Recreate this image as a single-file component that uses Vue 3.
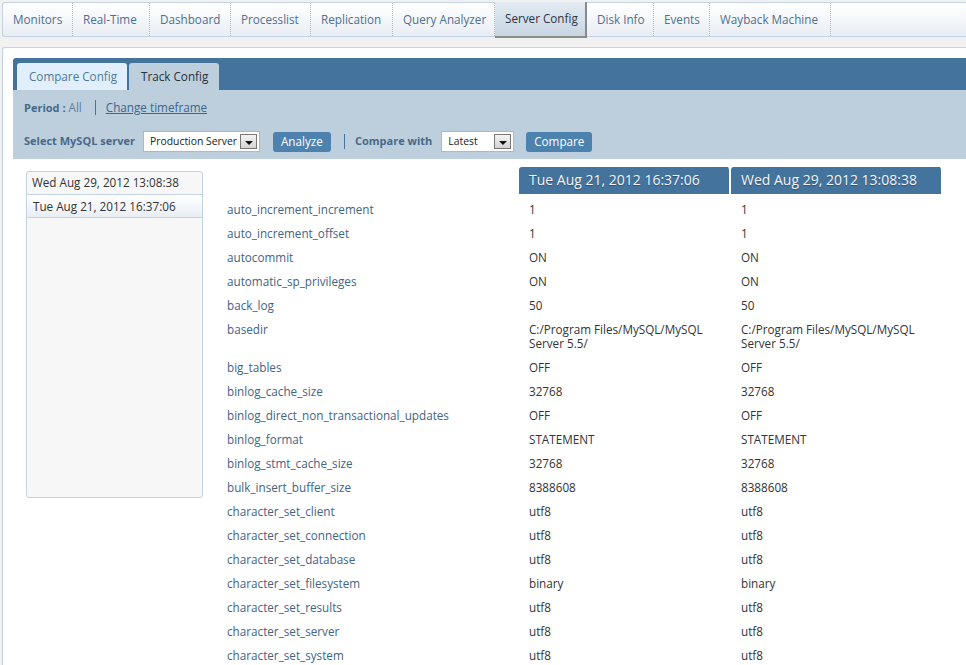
<template>
  <div class="page">
    <!-- top nav -->
    <ul class="nav">
      <li
        v-for="item in navItems"
        :key="item.label"
        :class="{ active: item.label === 'Server Config' }"
        :style="{ width: item.width + 'px' }"
      >{{ item.label }}</li>
    </ul>

    <div class="card">
      <div class="tabs">
        <span class="tab first">Compare Config</span>
        <span class="tab current">Track Config</span>
      </div>

      <div class="filters">
        <div class="period">
          <b>Period :</b> <span class="all">All</span>
          <i class="sep"></i>
          <a class="change">Change timeframe</a>
        </div>
        <div class="server-row">
          <b>Select MySQL server</b>
          <div class="select server">
            <span>Production Server</span>
            <i class="arrow"></i>
          </div>
          <button class="btn analyze">Analyze</button>
          <i class="sep"></i>
          <b>Compare with</b>
          <div class="select latest">
            <span>Latest</span>
            <i class="arrow"></i>
          </div>
          <button class="btn">Compare</button>
        </div>
      </div>

      <div class="body">
        <div class="history">
          <div class="snap">Wed Aug 29, 2012 13:08:38</div>
          <div class="snap selected">Tue Aug 21, 2012 16:37:06</div>
        </div>

        <table class="config">
          <thead>
            <tr>
              <th class="blank"></th>
              <th class="date">Tue Aug 21, 2012 16:37:06</th>
              <th class="date">Wed Aug 29, 2012 13:08:38</th>
            </tr>
          </thead>
          <tbody>
            <tr v-for="row in rows" :key="row[0]">
              <td class="name">{{ row[0] }}</td>
              <td class="val">{{ row[1] }}</td>
              <td class="val">{{ row[1] }}</td>
            </tr>
          </tbody>
        </table>
      </div>
    </div>
  </div>
</template>

<script setup>
const navItems = [
  { label: 'Monitors', width: 70 },
  { label: 'Real-Time', width: 77 },
  { label: 'Dashboard', width: 81 },
  { label: 'Processlist', width: 80 },
  { label: 'Replication', width: 82 },
  { label: 'Query Analyzer', width: 102 },
  { label: 'Server Config', width: 92 },
  { label: 'Disk Info', width: 67 },
  { label: 'Events', width: 56 },
  { label: 'Wayback Machine', width: 121 }
]

const rows = [
  ['auto_increment_increment', '1'],
  ['auto_increment_offset', '1'],
  ['autocommit', 'ON'],
  ['automatic_sp_privileges', 'ON'],
  ['back_log', '50'],
  ['basedir', 'C:/Program Files/MySQL/MySQL Server 5.5/'],
  ['big_tables', 'OFF'],
  ['binlog_cache_size', '32768'],
  ['binlog_direct_non_transactional_updates', 'OFF'],
  ['binlog_format', 'STATEMENT'],
  ['binlog_stmt_cache_size', '32768'],
  ['bulk_insert_buffer_size', '8388608'],
  ['character_set_client', 'utf8'],
  ['character_set_connection', 'utf8'],
  ['character_set_database', 'utf8'],
  ['character_set_filesystem', 'binary'],
  ['character_set_results', 'utf8'],
  ['character_set_server', 'utf8'],
  ['character_set_system', 'utf8']
]
</script>

<style>
html, body {
  margin: 0;
  height: 100%;
  overflow: hidden;
  background: #f1f1f1;
}
</style>

<style scoped>
.page {
  height: 665px;
  overflow: hidden;
  padding: 2px 0 0 2px;
  box-sizing: border-box;
  font-family: "Open Sans", "Liberation Sans", sans-serif;
  font-size: 11.7px;
  color: #333;
}

/* nav */
.nav {
  display: flex;
  list-style: none;
  margin: 0;
  padding: 0;
  height: 35px;
  box-sizing: border-box;
  border: 1px solid #c3d3e2;
  border-right: 0;
  border-radius: 3px 0 0 3px;
  background: linear-gradient(#ffffff, #e9eef4);
}
.nav li {
  display: flex;
  align-items: center;
  box-sizing: border-box;
  padding: 0 0 2px 10px;
  white-space: nowrap;
  color: #4f6f8f;
  border-right: 1px dotted #a9bdcf;
}
.nav li.active {
  margin: -1px 0 -2px 0;
  color: #2b3540;
  border-right: 2px solid #8a8a8a;
  border-bottom: 2px solid #8a8a8a;
  background: linear-gradient(#e2ebf3, #c8d5e1);
}

/* card */
.card {
  margin-top: 10px;
  height: 620px;
  padding: 10px 0 0 10px;
  background: #fff;
  border-top: 1px solid #c3d3e2;
  border-left: 1px solid #c3d3e2;
  border-radius: 3px 0 0 0;
}
.tabs {
  display: flex;
  gap: 2px;
  height: 32px;
  box-sizing: border-box;
  padding: 5px 0 0 4px;
  background: #44739e;
  border-radius: 3px 0 0 0;
}
.tab {
  display: flex;
  align-items: center;
  box-sizing: border-box;
  padding: 0 0 2px 12px;
  white-space: nowrap;
  border-radius: 3px 3px 0 0;
}
.tab.first {
  width: 110px;
  background: #e0effb;
  color: #4f7898;
}
.tab.current {
  width: 90px;
  background: #bdcfdd;
  color: #2a2f38;
}

.filters {
  height: 69px;
  box-sizing: border-box;
  padding: 7px 0 0 11px;
  background: #bdcfdd;
  color: #47698a;
}
.filters b {
  font-size: 11px;
}
.period {
  display: flex;
  align-items: center;
  height: 20px;
}
.period b {
  margin-right: 3px;
}
.all {
  color: #5d81a0;
}
.period .sep {
  margin: 0 10px 0 13px;
}
.change {
  color: #3c668c;
  text-decoration: underline;
}
.sep {
  width: 1px;
  height: 15px;
  background: #44739e;
}
.server-row {
  display: flex;
  align-items: center;
  height: 21px;
  margin-top: 14px;
}
.server-row b {
  padding-bottom: 2px;
}
.select {
  display: flex;
  align-items: center;
  justify-content: space-between;
  height: 21px;
  box-sizing: border-box;
  padding: 0 2px 0 6px;
  background: #fff;
  border: 1px solid #a5bacb;
  color: #222;
  font-size: 10.4px;
  white-space: nowrap;
}
.select span {
  padding-bottom: 2px;
}
.select.server {
  width: 117px;
  margin: 0 13px 0 8px;
}
.select.latest {
  width: 73px;
  margin: 0 12px 0 9px;
}
.arrow {
  position: relative;
  flex: none;
  width: 17px;
  height: 15px;
  box-sizing: border-box;
  border: 1px solid #777;
  background: linear-gradient(#f4f4f4, #d4d4d4);
}
.arrow::after {
  content: "";
  position: absolute;
  left: 4px;
  top: 6px;
  border: 4px solid transparent;
  border-top: 4px solid #111;
  border-bottom: 0;
}
.btn {
  height: 20px;
  width: 66px;
  padding: 0 0 2px;
  border: 0;
  border-radius: 3px;
  background: #4d81ae;
  color: #fff;
  font: inherit;
}
.analyze {
  width: 58px;
}
.server-row .sep {
  margin: 0 10px 0 13px;
}

/* body */
.body {
  display: flex;
  align-items: flex-start;
  padding: 8px 0 0 13px;
}
.history {
  width: 177px;
  height: 327px;
  margin-top: 4px;
  flex: none;
  box-sizing: border-box;
  border: 1px solid #c3d3e2;
  border-radius: 3px;
  background: #f7f7f7;
}
.snap {
  height: 22px;
  line-height: 21px;
  padding-left: 5px;
  color: #333;
}
.snap.selected {
  height: 24px;
  line-height: 22px;
  padding-left: 6px;
  box-sizing: border-box;
  border-top: 1px solid #c3d3e2;
  border-bottom: 1px solid #c3d3e2;
  background: linear-gradient(#ffffff, #e9eef4);
}
.config {
  margin-left: 14px;
  border-collapse: separate;
  border-spacing: 0;
  table-layout: fixed;
  width: 726px;
}
.blank {
  width: 302px;
  padding: 0;
}
.date {
  width: 212px;
  height: 30px;
  padding: 0 0 3px 10px;
  box-sizing: border-box;
  background: #44739e;
  background-clip: padding-box;
  border-radius: 3px 3px 0 0;
  border-right: 2px solid #fff;
  border-bottom: 3px solid #fff;
  color: #f2f6fa;
  font-size: 14px;
  font-weight: 400;
  text-align: left;
  text-shadow: 0 1px 1px rgba(0, 0, 0, 0.3);
}
.config td {
  padding: 5px 10px;
  line-height: 14px;
  vertical-align: top;
}
.name {
  color: #3f6486;
}
.config td.val {
  color: #333;
  padding-right: 24px;
}
</style>
